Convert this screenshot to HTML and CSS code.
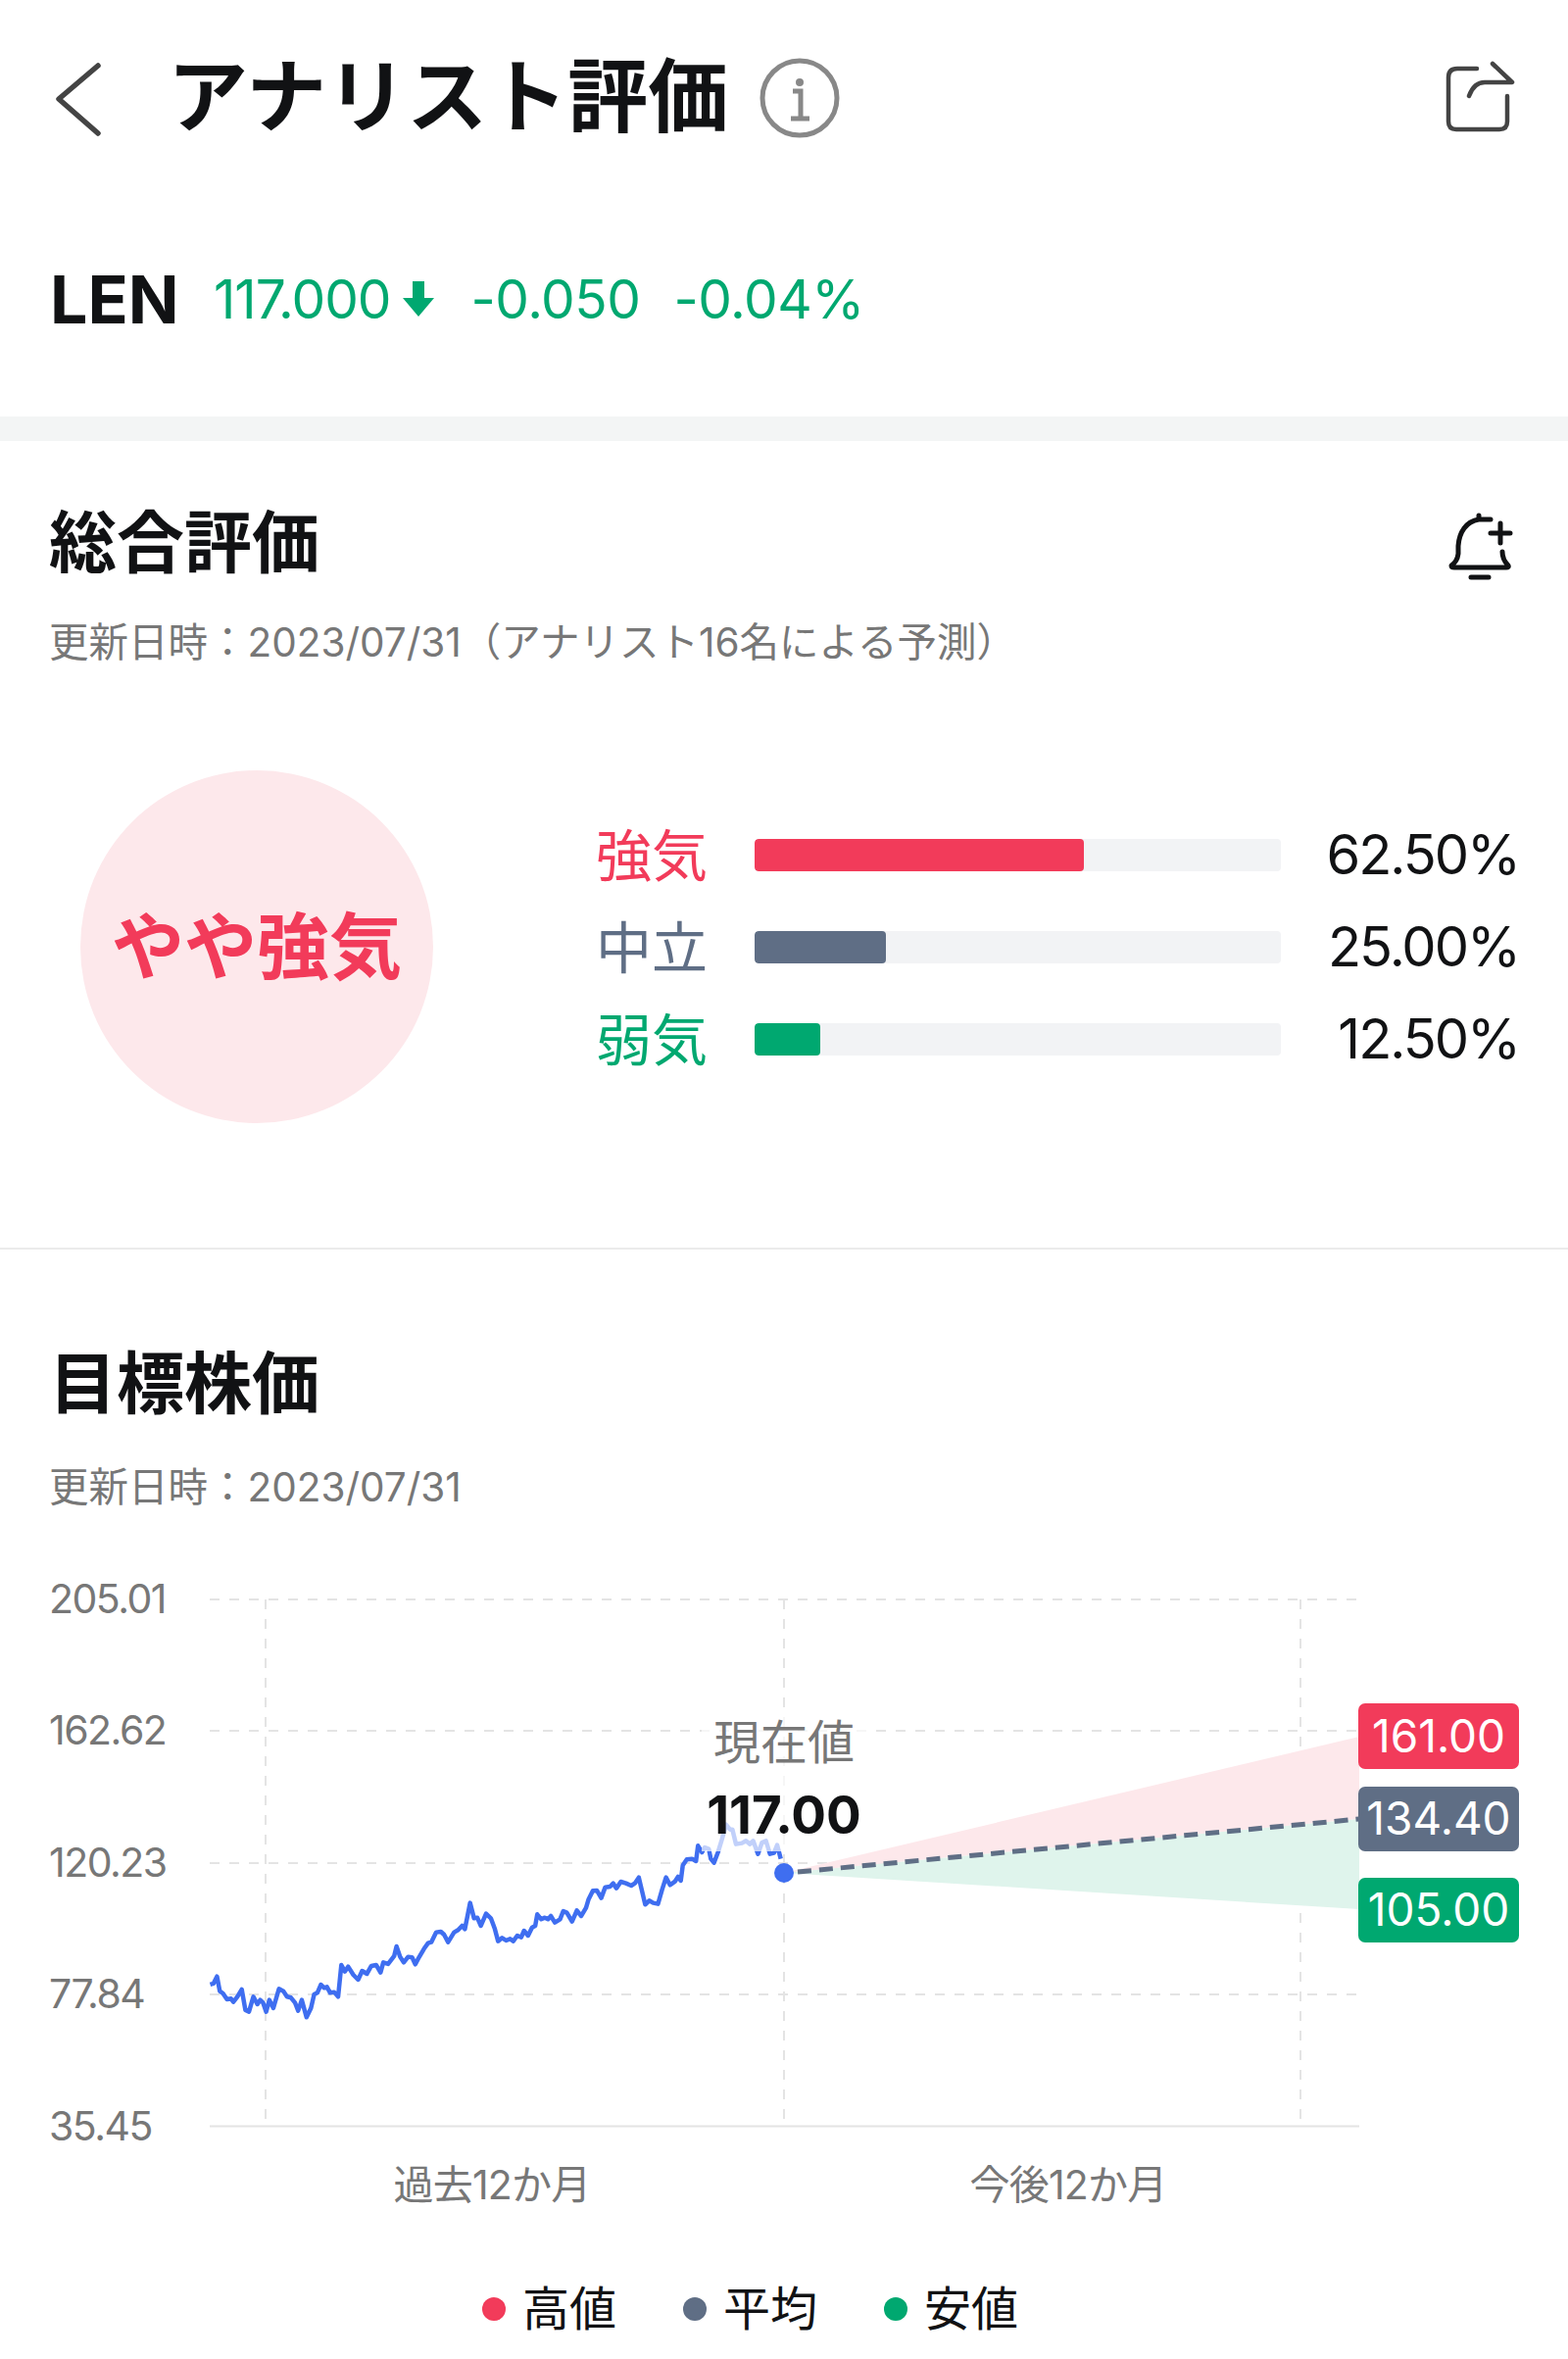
FILE: index.html
```html
<!DOCTYPE html>
<html lang="ja">

<head>
	<meta charset="UTF-8">
	<meta name="viewport" content="width=device-width, initial-scale=1.0">
	<title>アナリスト評価</title>
	<link rel="stylesheet" href="styles.css">
</head>

<body>
	<header class="topbar">
		<svg class="icon-back" viewBox="0 0 48 80"><path d="M44 7 L4 41 L44 76" /></svg>
		<h1 class="page-title">アナリスト評価</h1>
		<svg class="icon-info" viewBox="0 0 84 84">
			<circle cx="42" cy="42" r="38" />
			<circle class="dot" cx="42" cy="26" r="4" />
			<path d="M35 35 H43 V63 M33 63 H52" />
		</svg>
		<svg class="icon-share" viewBox="0 0 72 72">
			<path d="M35 6 H15 Q6 6 6 15 V60 Q6 68 14 68 H58 Q66 68 66 60 V34" />
			<path d="M51 1 L71 20 H43 Q32 20 27 34" />
		</svg>
	</header>

	<div class="quote">
		<span class="symbol">LEN</span>
		<span class="price">117.000</span>
		<svg class="icon-down" viewBox="0 0 34 36"><path d="M11 0 H23 V17 H33 L17 36 L1 17 H11 Z" /></svg>
		<span class="change">-0.050</span>
		<span class="change">-0.04%</span>
	</div>

	<div class="band"></div>

	<section class="rating">
		<div class="section-head">
			<h2 class="section-title">総合評価</h2>
			<svg class="icon-bell" viewBox="0 0 70 70">
				<path d="M44 11 H32 C19 13 12 24 11 38 V46 Q10 54 4 58 Q4 60 7 60 H60 Q63 60 62 58 Q56 52 56 44" />
				<path d="M32 10 V7 M44 25 H64 M54 15 V35 M24 70 H42" />
			</svg>
		</div>
		<p class="updated">更新日時：2023/07/31（アナリスト16名による予測）</p>
		<div class="rating-body">
			<div class="rating-circle">やや強気</div>
			<div class="rating-rows">
				<div class="rating-row">
					<span class="row-label red">強気</span>
					<div class="track"><div class="fill bg-red" style="width: 62.5%"></div></div>
					<span class="row-value">62.50%</span>
				</div>
				<div class="rating-row">
					<span class="row-label gray">中立</span>
					<div class="track"><div class="fill bg-gray" style="width: 25%"></div></div>
					<span class="row-value">25.00%</span>
				</div>
				<div class="rating-row">
					<span class="row-label green">弱気</span>
					<div class="track"><div class="fill bg-green" style="width: 12.5%"></div></div>
					<span class="row-value">12.50%</span>
				</div>
			</div>
		</div>
	</section>

	<section class="target">
		<h2 class="section-title">目標株価</h2>
		<p class="updated">更新日時：2023/07/31</p>

		<!-- 座標はページ座標のまま (viewBox の y が 1600 から) -->
		<svg class="chart" viewBox="0 1600 1600 660">
			<g class="grid">
				<path d="M214 1632 H1387 M214 1766 H1387 M214 1901 H1387 M214 2035 H1387" />
				<path d="M271 1632 V2169 M800 1632 V2169 M1327 1632 V2169" />
			</g>
			<path class="axis" d="M214 2169.5 H1387" />

			<g class="axis-text">
				<text x="50" y="1646">205.01</text>
				<text x="50" y="1780">162.62</text>
				<text x="50" y="1915">120.23</text>
				<text x="50" y="2049">77.84</text>
				<text x="50" y="2184">35.45</text>
				<text class="mid" x="502" y="2244">過去12か月</text>
				<text class="mid" x="1090" y="2244">今後12か月</text>
			</g>

			<polygon class="fan-high" points="800,1911 1387,1772 1387,1856" />
			<polygon class="fan-low" points="800,1911 1387,1856 1387,1948" />
			<path class="avg-line" d="M814 1910 L1387 1856" />

			<g transform="translate(190 1750) scale(0.408 0.3333)">
				<polyline class="price-line" points="60,825 68,822 77,800 84,845 92,852 102,870 112,868 118,878 128,862 139,840 148,903 157,908 168,862 178,885 185,872 192,880 200,908 208,872 218,897 232,838 243,845 252,862 262,865 272,880 280,905 289,872 301,925 312,897 320,855 328,850 337,825 345,835 352,832 360,850 370,848 380,862 388,765 397,785 405,770 418,795 430,810 440,783 452,792 463,768 475,765 486,788 493,757 505,762 520,738 526,708 535,740 544,757 555,740 565,742 573,763 582,742 595,715 605,698 613,695 625,665 637,663 645,672 655,695 670,665 680,658 690,645 697,655 710,575 720,622 728,620 737,645 750,608 762,622 772,655 780,692 790,682 800,690 810,685 818,692 828,675 838,680 845,660 855,675 865,650 873,645 878,610 888,625 897,620 905,625 912,615 922,635 935,625 943,600 952,605 965,632 977,598 988,615 1000,590 1006,565 1017,538 1027,537 1038,560 1048,527 1060,525 1068,515 1076,530 1087,510 1100,515 1113,522 1122,515 1132,497 1148,580 1158,568 1168,575 1180,578 1190,535 1200,497 1210,520 1222,510 1230,495 1237,507 1242,460 1252,442 1265,440 1275,447 1280,400 1290,420 1297,405 1307,410 1312,440 1320,452 1330,420 1340,380 1350,335 1360,350 1366,350 1375,395 1390,392 1400,385 1410,395 1418,385 1430,425 1440,390 1450,385 1460,425 1470,422 1478,398 1487,440" />
			</g>

			<!-- ラベルの半透明の下地 -->
			<rect class="label-veil" x="716" y="1745" width="171" height="144" />
			<circle class="now-dot" cx="800" cy="1911" r="10" />
			<text class="now-label" x="800" y="1795">現在値</text>
			<text class="now-value" x="800" y="1871">117.00</text>

			<rect class="bg-red" x="1386" y="1738" width="164" height="67" rx="7" />
			<text class="tag-text" x="1468" y="1788">161.00</text>
			<rect class="bg-gray" x="1386" y="1823" width="164" height="66" rx="7" />
			<text class="tag-text" x="1468" y="1872">134.40</text>
			<rect class="bg-green" x="1386" y="1916" width="164" height="66" rx="7" />
			<text class="tag-text" x="1468" y="1965">105.00</text>
		</svg>

		<div class="legend">
			<span class="legend-item"><i class="legend-dot bg-red"></i>高値</span>
			<span class="legend-item"><i class="legend-dot bg-gray"></i>平均</span>
			<span class="legend-item"><i class="legend-dot bg-green"></i>安値</span>
		</div>
	</section>
</body>

</html>
```

FILE: styles.css
```css
html,
body {
	margin: 0;
	padding: 0;
	background: white;
	font-family: Inter, "Noto Sans CJK JP", sans-serif;
	color: #111214;
}

body {
	width: 1600px;
	height: 2407px;
	overflow: hidden;
}

svg {
	display: block;
	flex: none;
	overflow: visible;
}

h1,
h2,
p {
	margin: 0;
}

/* cabecalho */
.topbar {
	height: 200px;
	display: flex;
	align-items: center;
	padding-left: 56px;
	padding-right: 56px;
}

.icon-back {
	width: 48px;
	height: 80px;
	fill: none;
	stroke: #444;
	stroke-width: 5.5;
	stroke-linecap: round;
	stroke-linejoin: round;
}

.page-title {
	margin-left: 67px;
	margin-right: 31px;
	margin-bottom: 2px;
	font-size: 82px;
	line-height: 100px;
	font-weight: 700;
}

.icon-info {
	width: 84px;
	height: 84px;
	fill: none;
	stroke: #888;
	stroke-width: 5;
}

.icon-info .dot {
	fill: #888;
	stroke: none;
}

.icon-share {
	width: 72px;
	height: 72px;
	margin-left: auto;
	fill: none;
	stroke: #444;
	stroke-width: 4.5;
	stroke-linecap: round;
	stroke-linejoin: round;
}

/* cotacao */
.quote {
	height: 225px;
	box-sizing: border-box;
	padding-bottom: 16px;
	display: flex;
	align-items: center;
	padding-left: 51px;
	color: #00a870;
	font-size: 55px;
	letter-spacing: -1px;
}

.symbol {
	width: 167px;
	font-size: 68px;
	font-weight: 700;
	letter-spacing: 0;
	color: #111214;
}

.icon-down {
	width: 34px;
	height: 36px;
	margin-left: 11px;
	margin-right: 37px;
	fill: #00a870;
}

.change {
	margin-right: 34px;
	letter-spacing: -0.5px;
}

.band {
	height: 25px;
	background: #f3f5f5;
}

/* secoes */
.rating {
	height: 825px;
	box-sizing: border-box;
	padding: 56px 50px 0;
	border-bottom: 2px solid #ebebeb;
}

.section-head {
	display: flex;
	justify-content: space-between;
	align-items: center;
}

.section-title {
	font-size: 69px;
	line-height: 96px;
	font-weight: 700;
}

.icon-bell {
	width: 70px;
	height: 70px;
	margin-right: 3px;
	fill: none;
	stroke: #111214;
	stroke-width: 5;
	stroke-linecap: round;
	stroke-linejoin: round;
}

.updated {
	margin-top: 24px;
	font-size: 40.5px;
	line-height: 60px;
	color: #777;
}

.rating-body {
	display: flex;
	align-items: center;
	margin-top: 100px;
	padding-left: 32px;
}

.rating-circle {
	width: 360px;
	height: 360px;
	box-sizing: border-box;
	padding-bottom: 12px;
	border-radius: 50%;
	background: #fde8eb;
	color: #f23b5a;
	font-size: 74px;
	font-weight: 700;
	display: flex;
	align-items: center;
	justify-content: center;
}

.rating-rows {
	flex: 1;
	margin-left: 166px;
	display: flex;
	flex-direction: column;
	gap: 34px;
}

.rating-row {
	height: 60px;
	display: flex;
	align-items: center;
}

.row-label {
	width: 162px;
	padding-bottom: 6px;
	font-size: 57px;
}

.row-value {
	margin-left: auto;
	font-size: 56px;
	letter-spacing: -2px;
}

.track {
	width: 537px;
	height: 33px;
	border-radius: 4px;
	background: #f2f3f5;
	overflow: hidden;
}

.fill {
	height: 100%;
	border-radius: 4px;
}

.red {
	color: #f23b5a;
}

.gray {
	color: #5f6e85;
}

.green {
	color: #00a870;
}

.bg-red {
	background: #f23b5a;
	fill: #f23b5a;
}

.bg-gray {
	background: #5f6e85;
	fill: #5f6e85;
}

.bg-green {
	background: #00a870;
	fill: #00a870;
}

.target {
	padding: 89px 50px 0;
}

.target .updated {
	margin-top: 28px;
}

/* grafico */
.chart {
	width: 1600px;
	height: 660px;
	margin-top: 52px;
	margin-left: -50px;
}

.grid path {
	fill: none;
	stroke: #e4e4e4;
	stroke-width: 2;
	stroke-dasharray: 10 10;
}

.axis {
	fill: none;
	stroke: #e4e4e4;
	stroke-width: 2;
}

.axis-text text {
	font-size: 41px;
	letter-spacing: -1.5px;
	fill: #777;
}

.axis-text .mid {
	text-anchor: middle;
	letter-spacing: -0.8px;
}

.fan-high {
	fill: #fde8eb;
}

.fan-low {
	fill: #dff4ec;
}

.avg-line {
	fill: none;
	stroke: #5f6e85;
	stroke-width: 5;
	stroke-dasharray: 14 8;
}

.price-line {
	fill: none;
	stroke: #3f6ef0;
	stroke-width: 4.5;
	stroke-linejoin: round;
	vector-effect: non-scaling-stroke;
}

.label-veil {
	fill: white;
	opacity: 0.68;
}

.now-dot {
	fill: #3f6ef0;
}

.now-label {
	font-size: 48px;
	text-anchor: middle;
	fill: #777;
}

.now-value {
	font-size: 53px;
	font-weight: 700;
	text-anchor: middle;
	fill: #111214;
}

.tag-text {
	font-size: 46px;
	text-anchor: middle;
	fill: white;
}

.legend {
	display: flex;
	gap: 68px;
	margin-top: 66px;
	padding-left: 442px;
	font-size: 48px;
	line-height: 60px;
}

.legend-item {
	display: flex;
	align-items: center;
	gap: 17px;
}

.legend-dot {
	width: 24px;
	height: 24px;
	border-radius: 50%;
}
```
